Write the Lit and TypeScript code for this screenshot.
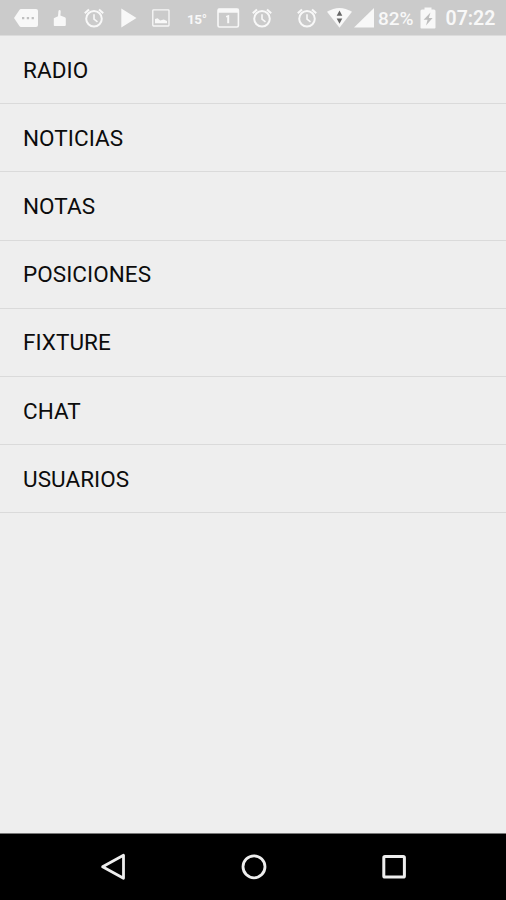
import { LitElement, html, svg, css } from "lit";
import { customElement } from "lit/decorators.js";

const alarm = svg`
  <circle cx="10" cy="10.8" r="7.8" fill="none" stroke="#f8f8f8" stroke-width="2"/>
  <path d="M.8 5.2 5 1.5M19.2 5.2 15 1.5" fill="none" stroke="#f8f8f8" stroke-width="2.1"/>
  <path d="M10 6.3V11l3.5 2.8" fill="none" stroke="#f8f8f8" stroke-width="1.6"/>`;

@customElement("app-root")
export class AppRoot extends LitElement {
  static styles = css`
    :host {
      display: flex;
      flex-direction: column;
      height: 900px;
      background: #eee;
      font-family: Roboto, "Liberation Sans", sans-serif;
      overflow: hidden;
    }
    .status {
      display: flex;
      justify-content: space-between;
      align-items: center;
      height: 36px;
      flex: none;
      box-sizing: border-box;
      padding: 1px 9.5px 0 14px;
      background: #cbcbcb;
      border-bottom: 1px solid #dcdcdc;
      color: #f8f8f8;
      white-space: nowrap;
    }
    .group { display: grid; align-items: center; }
    .notices { grid-template-columns: 39px 30.5px 37.5px 31px 35px 30px 35px 20px; }
    .system { grid-template-columns: 29.5px 27px 24.5px 42px 25.5px 51px; }
    svg { display: block; flex: none; overflow: visible; }
    .temp { font-size: 13.5px; font-weight: 700; line-height: 20px; letter-spacing: -0.4px; padding-top: 1px; }
    .percent { font-size: 19px; font-weight: 500; line-height: 22px; padding-top: 2px; letter-spacing: -0.1px; }
    .clock { font-size: 19.5px; font-weight: 600; line-height: 22px; padding-top: 2px; }
    .list { flex: 1; margin: 0; padding: 0; list-style: none; }
    .row {
      display: flex;
      align-items: center;
      height: 68.2px;
      box-sizing: border-box;
      padding: 0 0 0 23px;
      border-bottom: 1px solid #dadada;
      color: #0c0c0c;
      font-size: 22.5px;
      letter-spacing: 0.05px;
    }
    .nav {
      display: flex;
      justify-content: space-between;
      align-items: center;
      height: 67px;
      flex: none;
      box-sizing: border-box;
      padding: 0 99px 0 100px;
      border-top: 1px solid #777;
      background: #000;
    }
  `;

  items = ["RADIO", "NOTICIAS", "NOTAS", "POSICIONES", "FIXTURE", "CHAT", "USUARIOS"];

  render() {
    return html`
      <div class="status">
        <div class="group notices">
          <svg width="24" height="20" viewBox="0 0 24 20">
            <path d="M7 1H22a2 2 0 0 1 2 2V17a2 2 0 0 1-2 2H7q-1 0-1.6-.9L0 10l5.4-8.1Q6 1 7 1Z" fill="#f8f8f8"/>
            <path d="M8 9h2.3v2.3H8zM12.8 9h2.3v2.3h-2.3zM17.6 9h2.3v2.3h-2.3z" fill="#c0c0c0"/>
          </svg>
          <svg width="14" height="20" viewBox="0 0 14 20">
            <path d="M.8 10.2 5 8.2 5.4 3.4Q5.5 2 6.7 2 7.8 2 7.7 3.8L7.4 7.6l4.4 1.6q1 .4 1 1.6V17q0 1-1 1H1.6q-.8 0-.8-.8Z" fill="#f8f8f8"/>
          </svg>
          <svg width="20" height="20" viewBox="0 0 20 20">${alarm}</svg>
          <svg width="16" height="20" viewBox="0 0 16 20"><path d="M.3.5 15.5 10 .3 19.5Z" fill="#f8f8f8"/></svg>
          <svg width="18" height="20" viewBox="0 0 18 20">
            <rect x=".8" y="1.8" width="16.2" height="16.2" rx=".8" fill="none" stroke="#f8f8f8" stroke-width="1.3"/>
            <path d="M3 15.3v-4.2l2.6-.8 2.6 2.2 3.6-.9 3.2 1.4v2.3Z" fill="#f8f8f8"/>
          </svg>
          <span class="temp">15°</span>
          <svg width="22" height="20" viewBox="0 0 22 20">
            <rect x="1" y="1" width="20.4" height="18" rx="1.5" fill="none" stroke="#f8f8f8" stroke-width="1.6"/>
            <path d="M1 .8H21.4V4.8H1ZM9 8 12.2 6.8V15.3h-2V9.1L9 9.5Z" fill="#f8f8f8"/>
          </svg>
          <svg width="20" height="20" viewBox="0 0 20 20">${alarm}</svg>
        </div>
        <div class="group system">
          <svg width="20" height="20" viewBox="0 0 20 20">${alarm}</svg>
          <svg width="25" height="20" viewBox="0 0 25 20">
            <path d="M0 3.8Q12.5-4 25 3.8L12.5 19.7Z" fill="#f8f8f8"/>
            <path d="m12.5 2.5 2.8 5.2H9.7ZM12.5 15.8 9.7 10.6h5.6Z" fill="#666"/>
          </svg>
          <svg width="20" height="20" viewBox="0 0 20 20"><path d="M0 19.5 20 0V19.5Z" fill="#f8f8f8"/></svg>
          <span class="percent">82%</span>
          <svg width="16" height="22" viewBox="0 0 16 22">
            <path d="M4.5 2.5V.5h7v2H14q1.5 0 1.5 1.5V20.5q0 1-1 1H1.5q-1 0-1-1V4Q.5 2.5 2 2.5Z" fill="#f8f8f8"/>
            <path d="M10.5 5.5 3.6 12.8h4L6 18.5 12.6 11H8.8Z" fill="#bebebe"/>
          </svg>
          <span class="clock">07:22</span>
        </div>
      </div>
      <ul class="list">${this.items.map((t) => html`<li class="row">${t}</li>`)}</ul>
      <div class="nav">
        <svg width="26" height="28" viewBox="0 0 26 28"><path d="M2.6 13.8 23.5 2.3V25.3Z" fill="none" stroke="#eee" stroke-width="2.8" stroke-linejoin="round"/></svg>
        <svg width="26" height="26" viewBox="0 0 26 26"><circle cx="13" cy="12.8" r="11" fill="none" stroke="#eee" stroke-width="2.8"/></svg>
        <svg width="26" height="26" viewBox="0 0 26 26"><rect x="2.8" y="2.5" width="20.6" height="20.6" rx="1.2" fill="none" stroke="#eee" stroke-width="3"/></svg>
      </div>
    `;
  }
}
